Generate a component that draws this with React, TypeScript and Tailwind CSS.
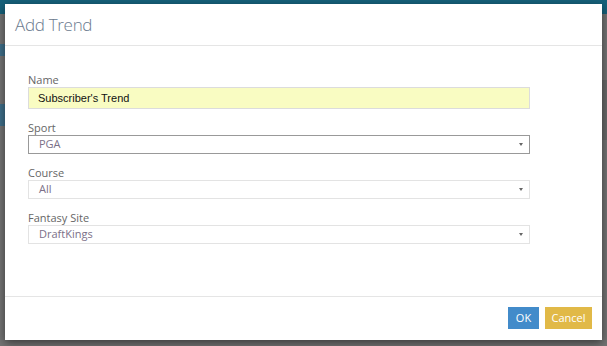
import { ChangeEvent, useState } from "react";

type SelectFieldProps = {
    label: string;
    value: string;
    focused?: boolean;
};

const SelectField = ({ label, value, focused }: SelectFieldProps) => {
    return (
        <div className="mt-[11px]">
            <div className="text-[11px] leading-[15px] text-[#666]">{label}</div>
            <div
                className={
                    "relative flex items-center h-[19px] w-[502px] bg-white pl-[10px] text-[11px] text-[#7b7088] " +
                    (focused ? "border border-[#999]" : "border border-[#e3e3e3]")
                }
            >
                {value}
                <span className="absolute right-[6px] top-[7px] w-0 h-0 border-l-[2px] border-r-[2px] border-t-[3px] border-l-transparent border-r-transparent border-t-[#666]" />
            </div>
        </div>
    );
};

const App = () => {
    const [name, setName] = useState("Subscriber's Trend");

    return (
        <div className="relative w-[607px] h-[346px] overflow-hidden bg-[#747474] font-['Open_Sans',sans-serif]">
            {/* dimmed page behind the modal */}
            <div className="absolute inset-x-0 top-0 h-[14px] bg-[#16617b]" />
            <div className="absolute left-0 top-[44px] w-[5px] h-[12px] bg-[#3f6f8a]" />
            <div className="absolute left-0 top-[104px] w-[5px] h-[22px] bg-[#3f6f8a]" />
            <div className="absolute right-0 top-[80px] w-[5px] h-[60px] bg-[#6a6a6a]" />

            <div className="absolute left-[5px] top-[4px] w-[597px] h-[336px] bg-white flex flex-col shadow-[0_3px_9px_rgba(0,0,0,0.5)]">
                <div className="h-[42px] border-b border-[#e5e5e5] flex items-center pl-[10px]">
                    <h4 className="text-[17px] font-light tracking-[-0.3px] text-[#6a7a8e] leading-none">Add Trend</h4>
                </div>

                <div className="flex-1 pl-[23px] pt-[15px]">
                    <div className="mt-[11px]">
                        <div className="text-[11px] leading-[15px] text-[#666]">Name</div>
                        <input
                            value={name}
                            onChange={(e: ChangeEvent<HTMLInputElement>) => setName(e.target.value)}
                            className="block h-[22px] w-[502px] bg-[#f9fcc2] border border-[#dcdcdc] pl-[9px] text-[11px] text-[#111] font-['Liberation_Sans',sans-serif] outline-none"
                        />
                    </div>
                    <SelectField label="Sport" value="PGA" focused />
                    <SelectField label="Course" value="All" />
                    <SelectField label="Fantasy Site" value="DraftKings" />
                </div>

                <div className="h-[44px] border-t border-[#e5e5e5] flex items-start justify-end gap-[6px] pt-[10px] pr-[10px]">
                    <button className="h-[22px] w-[31px] bg-[#428bca] text-white text-[11px]">OK</button>
                    <button className="h-[22px] w-[47px] bg-[#e1b947] text-white text-[11px]">Cancel</button>
                </div>
            </div>
        </div>
    );
};

export default App;
